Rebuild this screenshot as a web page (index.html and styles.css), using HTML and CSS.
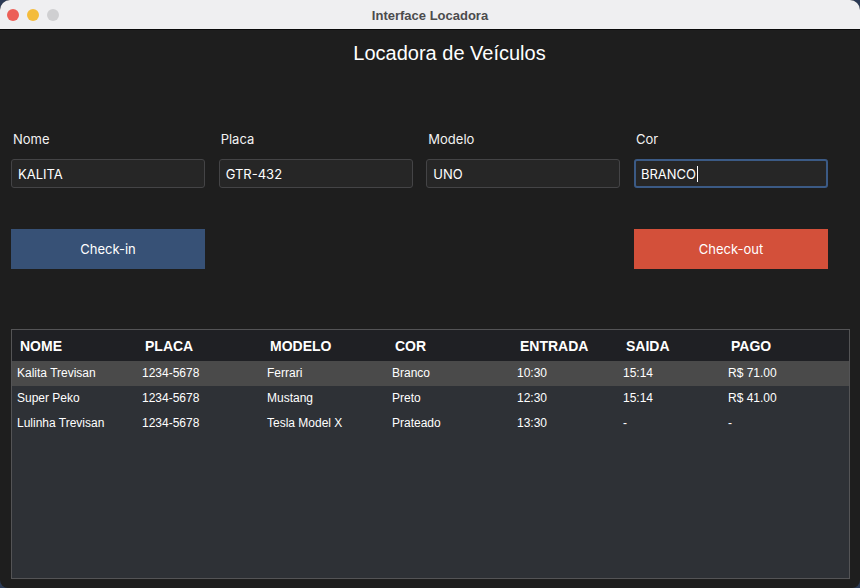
FILE: index.html
```html
<!DOCTYPE html>
<html lang="pt-BR">
<head>
<meta charset="utf-8">
<title>Interface Locadora</title>
<link rel="stylesheet" href="styles.css">
</head>
<body>
<div class="window">
  <div class="titlebar">
    <div class="lights">
      <span class="light red"></span>
      <span class="light yellow"></span>
      <span class="light gray"></span>
    </div>
    <div class="win-title">Interface Locadora</div>
  </div>
  <div class="content">
    <h1 class="heading">Locadora de Veículos</h1>
    <div class="form">
      <div class="group">
        <label class="label">Nome</label>
        <div class="field">KALITA</div>
      </div>
      <div class="group">
        <label class="label">Placa</label>
        <div class="field">GTR-432</div>
      </div>
      <div class="group">
        <label class="label">Modelo</label>
        <div class="field">UNO</div>
      </div>
      <div class="group">
        <label class="label">Cor</label>
        <div class="field focused">BRANCO<span class="caret"></span></div>
      </div>
    </div>
    <div class="actions">
      <button class="btn btn-in">Check-in</button>
      <button class="btn btn-out">Check-out</button>
    </div>
    <div class="table-wrap">
      <table class="grid">
        <thead>
          <tr>
            <th class="c1">NOME</th>
            <th class="c2">PLACA</th>
            <th class="c3">MODELO</th>
            <th class="c4">COR</th>
            <th class="c5">ENTRADA</th>
            <th class="c6">SAIDA</th>
            <th class="c7">PAGO</th>
          </tr>
        </thead>
        <tbody>
          <tr class="selected">
            <td>Kalita Trevisan</td><td>1234-5678</td><td>Ferrari</td><td>Branco</td><td>10:30</td><td>15:14</td><td>R$ 71.00</td>
          </tr>
          <tr>
            <td>Super Peko</td><td>1234-5678</td><td>Mustang</td><td>Preto</td><td>12:30</td><td>15:14</td><td>R$ 41.00</td>
          </tr>
          <tr>
            <td>Lulinha Trevisan</td><td>1234-5678</td><td>Tesla Model X</td><td>Prateado</td><td>13:30</td><td>-</td><td>-</td>
          </tr>
        </tbody>
      </table>
    </div>
  </div>
</div>
</body>
</html>
```
FILE: styles.css
```css
html, body {
  margin: 0;
  padding: 0;
}
body {
  width: 860px;
  height: 588px;
  background: #2b3a55;
  overflow: hidden;
}
.window {
  width: 860px;
  height: 588px;
  background: #1e1e1e;
  border-radius: 10px 10px 8px 8px;
  overflow: hidden;
  display: flex;
  flex-direction: column;
}
.titlebar {
  height: 29px;
  flex: none;
  background: #efeff1;
  border-bottom: 1px solid #0a0a0a;
  display: flex;
  align-items: center;
  justify-content: center;
  position: relative;
}
.lights {
  position: absolute;
  left: 7px;
  top: 9px;
  display: flex;
  gap: 8px;
}
.light {
  width: 12px;
  height: 12px;
  border-radius: 50%;
  display: block;
}
.red { background: #ec5f57; }
.yellow { background: #f4bc3b; }
.gray { background: #cfcfd1; }
.win-title {
  font-family: "Liberation Sans", Arial, sans-serif;
  font-weight: bold;
  font-size: 13px;
  color: #4b4b4d;
  margin-top: 1px;
}
.content {
  flex: 1;
  padding: 0 10px 9px 11px;
  display: flex;
  flex-direction: column;
}
.heading {
  margin: 11px 0 0;
  padding-left: 38px;
  font-family: "Liberation Sans", Arial, sans-serif;
  font-weight: normal;
  font-size: 20px;
  line-height: 24px;
  color: #ffffff;
  text-align: center;
}
.form {
  margin-top: 66px;
  display: grid;
  grid-template-columns: repeat(4, 194px);
  column-gap: 13.67px;
}
.group {
  display: flex;
  flex-direction: column;
}
.label {
  font-family: Inter, "Noto Sans", sans-serif;
  font-size: 13px;
  line-height: 16px;
  color: #f2f2f2;
  padding-left: 2px;
  margin-bottom: 12px;
}
.field {
  height: 26px;
  padding-top: 1px;
  border: 1px solid #444446;
  border-radius: 3px;
  background: #262626;
  box-sizing: content-box;
  font-family: Inter, "Noto Sans", sans-serif;
  font-size: 13px;
  color: #ffffff;
  padding-left: 6px;
  display: flex;
  align-items: center;
}
.field.focused {
  border: 2px solid #3b5a85;
  height: 24px;
  padding-left: 5px;
}
.caret {
  display: inline-block;
  width: 1px;
  height: 16px;
  background: #ffffff;
  margin-left: 1px;
}
.actions {
  margin-top: 41px;
  display: grid;
  grid-template-columns: repeat(4, 194px);
  column-gap: 13.67px;
}
.btn {
  height: 40px;
  border: none;
  border-radius: 0;
  font-family: Inter, "Noto Sans", sans-serif;
  font-size: 13px;
  color: #ffffff;
  padding: 0;
}
.btn-in {
  grid-column: 1;
  background: #375176;
}
.btn-out {
  grid-column: 4;
  background: #d3503a;
}
.table-wrap {
  margin-top: 60px;
  flex: 1;
  border: 1px solid #545456;
  background: #2e3136;
}
.grid {
  width: 100%;
  border-collapse: collapse;
  font-family: "Liberation Sans", Arial, sans-serif;
  color: #ffffff;
}
.grid th {
  background: #1f2024;
  height: 31px;
  padding: 1px 0 0 8px;
  box-sizing: border-box;
  text-align: left;
  font-weight: bold;
  font-size: 14px;
}
.grid td {
  height: 25px;
  padding: 0 0 1px 5px;
  box-sizing: border-box;
  font-size: 12px;
  text-align: left;
  white-space: nowrap;
}
.grid tr.selected td {
  background: #4a4a4a;
}
.c1, .c2, .c3, .c4 { width: 125px; }
.c5 { width: 106px; }
.c6 { width: 105px; }
```
